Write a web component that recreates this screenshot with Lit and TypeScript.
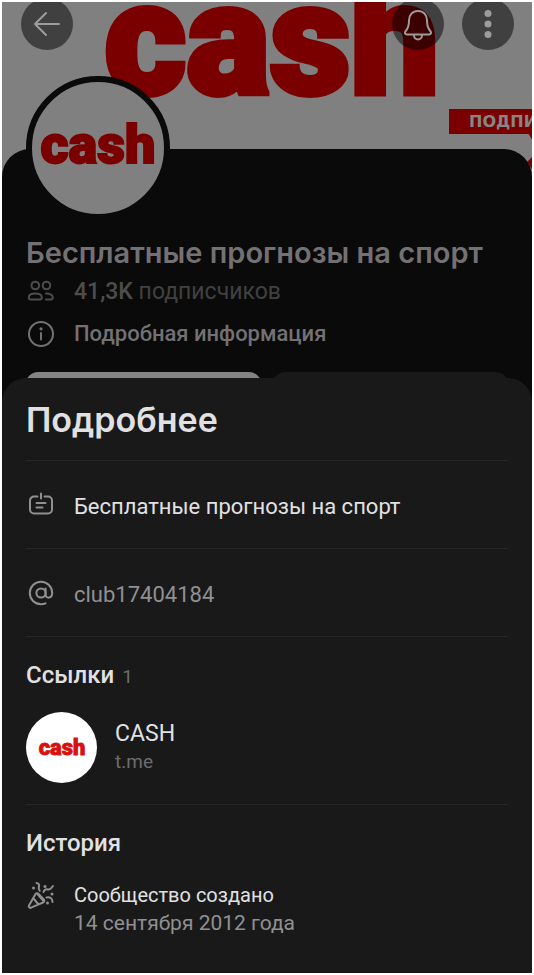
import { LitElement, html, css, svg } from "lit";
import { customElement, property } from "lit/decorators.js";

@customElement("cash-logo")
class CashLogo extends LitElement {
  static styles = css`
    :host { display: block; }
    .mark { display: block; width: 100%; height: 100%; overflow: visible; }
    .word {
      font: 900 54px Roboto, sans-serif;
      fill: currentColor;
      stroke: currentColor;
      stroke-width: 2px;
      text-anchor: middle;
    }
  `;
  render() {
    return html`<svg class="mark" viewBox="0 0 118 46" role="img" aria-label="cash">
      <text class="word" x="59" y="43">cash</text>
    </svg>`;
  }
}

const icons: Record<string, unknown> = {
  back: svg`<path d="M26 14H2M13 3 2 14l11 11"/>`,
  bell: svg`<path d="M14 1c-5.500 0-9 4-9 9.500 0 6-1 8-3.300 10.500-1.500 1.700-.7 3.500 1.300 3.500h22c2 0 2.800-1.800 1.300-3.500C24 18.500 23 16.500 23 10.500 23 5 19.500 1 14 1z"/><path d="M10 25.500a4 4 0 0 0 8 0"/>`,
  more: svg`<g class="solid"><circle cx="14" cy="3.500" r="3.500"/><circle cx="14" cy="14" r="3.500"/><circle cx="14" cy="24.500" r="3.500"/></g>`,
  people: svg`<circle cx="9.300" cy="7.500" r="3.800"/><circle cx="20.500" cy="7.500" r="3.800"/><path d="M9.300 15.500c4 0 6.500 1.700 6.500 3.900 0 1.200-.8 2-2 2h-9c-1.200 0-2-.8-2-2 0-2.200 2.500-3.900 6.500-3.900zM20 15.500c4 0 6.800 1.700 6.800 3.900 0 1.200-.8 2-2 2H20"/>`,
  info: svg`<circle cx="15" cy="14" r="12"/><path d="M15 13v6.500"/><circle class="solid" cx="15" cy="8.800" r="1.600"/>`,
  card: svg`<path d="M11.500 5.500H8a4 4 0 0 0-4 4v9a4 4 0 0 0 4 4h14a4 4 0 0 0 4-4v-9a4 4 0 0 0-4-4h-3.500M15 2.500v5M10.500 12h9M10.500 16.500h6"/>`,
  at: svg`<circle cx="15" cy="14" r="4.600"/><path d="M19.600 9.500v6.200c0 4.300 6.600 4 6.600-1.700A11.200 11.200 0 1 0 15 25.200c1.700 0 3.200-.3 4.600-.9"/>`,
  party: svg`<path d="M9.500 13 3 24.500c-.8 1.500.5 2.800 2 2.200L17 21.500c1.500-.7 1.700-2 .6-3.300l-4.800-5.100c-1.200-1.200-2.500-1.300-3.300-.1zM7.500 17.500l5 6M11.500 13l6 7M10.500 2c2.500.5 3 1.800 2.400 3.800s0 3.200.8 4M17.500 11c1-2.500 2.500-3 4.500-2.500 2.500.5 3.500-1.500 5-3.500M20.500 16.500c3.500-.8 6 .8 6 4.500"/><g class="solid"><circle cx="7.500" cy="7" r="1.500"/><circle cx="19" cy="5.500" r="1.500"/><circle cx="26" cy="13" r="1.500"/><circle cx="21.500" cy="22" r="1.500"/></g>`,
};

@customElement("line-icon")
class LineIcon extends LitElement {
  @property() name = "";
  static styles = css`
    :host { display: block; flex: none; width: 28px; height: 28px; }
    .glyph {
      display: block;
      width: 100%;
      height: 100%;
      overflow: visible;
      fill: none;
      stroke: currentColor;
      stroke-width: 2px;
      stroke-linecap: round;
      stroke-linejoin: round;
    }
    .solid { fill: currentColor; stroke: none; }
  `;
  render() {
    return html`<svg class="glyph" viewBox="0 0 28 28" aria-hidden="true">${icons[this.name]}</svg>`;
  }
}

@customElement("app-root")
class AppRoot extends LitElement {
  static styles = css`
    :host {
      display: flex;
      box-sizing: border-box;
      min-height: 100vh;
      padding: 2px;
      background: #fff;
      font: 22px/28px Roboto, "Noto Sans", sans-serif;
    }
    * { box-sizing: border-box; }
    h1, h2, h3, p { margin: 0; }
    button { border: 0; padding: 0; font: inherit; }
    a { color: inherit; text-decoration: none; }
    .screen {
      flex: 1;
      min-width: 0;
      display: flex;
      flex-direction: column;
      overflow: hidden;
      background: #808080;
    }
    .cover { position: relative; height: 147px; }
    .cover-logo { position: absolute; left: 98px; bottom: 47px; width: 344px; height: 134px; color: #7a0000; }
    .ribbon {
      position: absolute;
      left: 447px;
      top: 107px;
      width: 120px;
      height: 25px;
      padding-left: 20px;
      background: #7a0000;
      color: #868686;
      font: 700 16px/25px "DejaVu Sans", sans-serif;
    }
    .ribbon-tail { position: absolute; left: 525px; top: 131px; width: 40px; height: 40px; fill: #7a0000; }
    .bar { position: relative; display: flex; gap: 18px; padding: 0 18px 0 19px; margin-top: -4px; }
    .round {
      display: grid;
      place-items: center;
      width: 52px;
      height: 52px;
      border-radius: 50%;
      background: rgb(0 0 0 / 50%);
      color: #9c9c9c;
    }
    .back { margin-right: auto; }
    .profile {
      position: relative;
      padding: 86px 24px 0;
      border-radius: 28px 28px 0 0;
      background: #0a0a0a;
      color: #737173;
    }
    .avatar {
      position: absolute;
      left: 24px;
      top: -73px;
      display: grid;
      place-items: center;
      width: 144px;
      height: 144px;
      border: 6px solid #0a0a0a;
      border-radius: 50%;
      background: #808080;
      color: #7a0000;
    }
    .avatar-logo { width: 118px; height: 46px; margin-bottom: 10px; }
    .name { font: 600 29px/36px Inter, Roboto, sans-serif; }
    .fact { display: flex; align-items: center; gap: 20px; height: 42px; font-weight: 500; }
    .followers { color: #4d4d4d; font-size: 23px; }
    .muted { font-weight: 400; color: #414141; }
    .actions { display: grid; grid-template-columns: 1fr 1fr; gap: 12px; margin-top: 17px; }
    .action { height: 44px; border-radius: 12px; background: #191919; }
    .primary { background: #848484; }
    .sheet {
      position: relative;
      flex: 1;
      margin-top: -38px;
      padding: 0 24px 32px;
      border-radius: 24px 24px 0 0;
      background: #191919;
      color: #e1e1e3;
    }
    .title { padding: 22px 0 20px; font: 600 34px/40px Inter, Roboto, sans-serif; }
    .row { display: flex; align-items: center; gap: 20px; height: 88px; border-top: 1px solid #262626; }
    .row-text { padding-top: 4px; }
    .row line-icon, .event line-icon { color: #909092; }
    .dim { color: #909092; }
    .section { padding-top: 24px; border-top: 1px solid #262626; }
    .heading { font-weight: 500; font-size: 24px; line-height: 28px; }
    .count { margin-left: 2px; font-weight: 400; font-size: 19px; color: #6d6d6f; }
    .link { display: flex; align-items: center; gap: 18px; padding: 21px 0; }
    .thumb {
      display: grid;
      place-items: center;
      width: 71px;
      height: 71px;
      border-radius: 50%;
      background: #fff;
      color: #d8100e;
    }
    .thumb-logo { width: 48px; height: 19px; margin-bottom: 2px; }
    .link-name { font-size: 23px; }
    .host { font-size: 19px; color: #6d6d6f; }
    .event { display: flex; gap: 20px; padding-top: 24px; font-size: 21px; }
    .event-name { font-size: 20px; }
  `;

  render() {
    return html`<main class="screen">
      <header class="cover">
        <cash-logo class="cover-logo"></cash-logo>
        <div class="ribbon">ПОДПИ</div>
        <svg class="ribbon-tail" viewBox="0 0 40 40" aria-hidden="true"><path d="M1 0h39v8H6zM0 29l9-9v22z"/></svg>
        <nav class="bar">
          <button class="round back" aria-label="Назад"><line-icon name="back"></line-icon></button>
          <button class="round" aria-label="Уведомления"><line-icon name="bell"></line-icon></button>
          <button class="round" aria-label="Ещё"><line-icon name="more"></line-icon></button>
        </nav>
      </header>
      <section class="profile">
        <div class="avatar"><cash-logo class="avatar-logo"></cash-logo></div>
        <h1 class="name">Бесплатные прогнозы на спорт</h1>
        <p class="fact followers"><line-icon name="people"></line-icon><span>41,3K <span class="muted">подписчиков</span></span></p>
        <p class="fact"><line-icon name="info"></line-icon><span>Подробная информация</span></p>
        <div class="actions">
          <button class="action primary" aria-label="Подписаться"></button>
          <button class="action" aria-label="Сообщение"></button>
        </div>
      </section>
      <section class="sheet">
        <h2 class="title">Подробнее</h2>
        <p class="row"><line-icon name="card"></line-icon><span class="row-text">Бесплатные прогнозы на спорт</span></p>
        <p class="row dim"><line-icon name="at"></line-icon><span class="row-text">club17404184</span></p>
        <div class="section">
          <h3 class="heading">Ссылки <span class="count">1</span></h3>
          <a class="link" href="#">
            <span class="thumb"><cash-logo class="thumb-logo"></cash-logo></span>
            <div><p class="link-name">CASH</p><p class="host">t.me</p></div>
          </a>
        </div>
        <div class="section">
          <h3 class="heading">История</h3>
          <div class="event">
            <line-icon name="party"></line-icon>
            <div><p class="event-name">Сообщество создано</p><p class="dim">14 сентября 2012 года</p></div>
          </div>
        </div>
      </section>
    </main>`;
  }
}
